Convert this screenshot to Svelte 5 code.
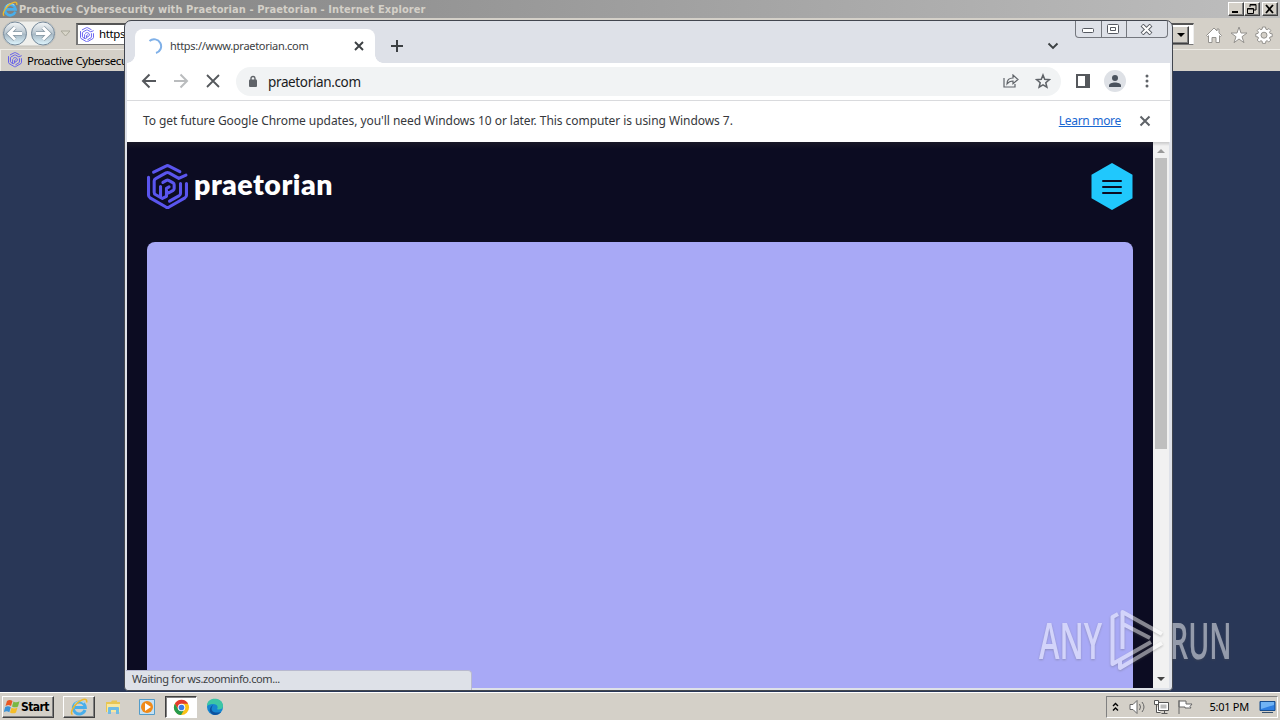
<script>
  const title = 'Proactive Cybersecurity with Praetorian - Praetorian - Internet Explorer';
</script>

{#snippet hexLogo(size, width)}
  <svg width={size} height={size * 1.1} viewBox="0 0 40 44" fill="none" stroke="#5a55ee" stroke-width={width} stroke-linejoin="round" stroke-linecap="round">
    <path d="M6.500 8 18.500 2Q20 1.200 21.500 2L32 7.500" />
    <path d="M1.500 13V30.500Q1.500 32 3 33L18.500 42Q20 42.800 21.500 42L37 33Q38.500 32 38.500 30.500V19" />
    <path d="M15.500 18 19 16Q20 15.500 21 16L25.500 18.500Q26.500 19 26.500 20.200V24Q26.500 25.200 25.500 25.800L21 28.300 19 27.200V23.700L21.500 22.300M19 27.200V31.500L15 33.500 13.200 32.500V22M13.200 32.500 8.500 30Q7 29.200 7 27.500V16.500Q7 15 8.500 14.200L18.500 8.700Q20 8 21.500 8.700L31 14 38 10.800M32.700 19V28.500Q32.700 30 31.500 30.800L22 36.300" />
  </svg>
{/snippet}

{#snippet ieIcon(size)}
  <svg width={size} height={size} viewBox="0 0 18 18" fill="none">
    <path d="M15 12A6 6 0 1 1 15.300 9.500H5" stroke="#49aeea" stroke-width="3" />
    <path d="M14 5A5.500 5.500 0 0 0 4.500 8" stroke="#a2dcf8" stroke-width="1.200" />
    <path d="M2.500 16.500C-1 15 5 5 11 2.500 15 .5 17.500 1 16.500 4.500" stroke="#edb82d" stroke-width="1.500" />
  </svg>
{/snippet}

<div class="desktop">
  <div class="ie">
    <header class="titlebar">
      {@render ieIcon(16)}
      <span class="title">{title}</span>
      <div class="classic-buttons">
        <button aria-label="Minimize"><svg width="12" height="10"><path d="M2 8h6" stroke="#000" stroke-width="2" /></svg></button>
        <button aria-label="Restore"><svg width="12" height="10" fill="none" stroke="#000"><path d="M4 3V.5h6V6H8M4 1h6M1.500 4.500h6v5h-6zM1.500 5h6" /></svg></button>
        <button class="apart" aria-label="Close"><svg width="12" height="10" stroke="#000" stroke-width="1.800"><path d="m2 1 7 8M9 1 2 9" /></svg></button>
      </div>
    </header>
    <div class="navbar">
      <svg class="history" width="74" height="28" viewBox="0 0 74 28">
        <defs><linearGradient id="orb" x2="0" y2="1"><stop stop-color="#f5f7f8" /><stop offset=".48" stop-color="#bac7d0" /><stop offset=".52" stop-color="#a6b7c3" /><stop offset="1" stop-color="#e0f7ff" /></linearGradient></defs>
        <path d="M14 1h28a12.500 12.500 0 0 1 0 25H14A12.500 12.500 0 0 1 14 1Z" fill="#efefec" stroke="#c1bfb8" />
        <circle cx="14" cy="13.500" r="11.500" fill="url(#orb)" stroke="#76899a" />
        <circle cx="42" cy="13.500" r="11.500" fill="url(#orb)" stroke="#76899a" />
        <path d="M21 13.500H8m6-6-6 6 6 6M35 13.500h13m-6-6 6 6-6 6" fill="none" stroke="#8798a4" stroke-width="4.500" />
        <path d="M21 13.500H8m6-6-6 6 6 6M35 13.500h13m-6-6 6 6-6 6" fill="none" stroke="#fff" stroke-width="3" />
        <path d="M60 11h9l-4.500 5z" fill="#d9d6ca" stroke="#aaa89a" />
      </svg>
      <div class="address">{@render hexLogo(14, 2.6)}<span>https</span><i class="drop"></i></div>
      <div class="ie-tools">
        <svg width="18" height="18" viewBox="0 0 18 18"><path d="m1.500 9.500 7.500-7.500 3 3V3h2v4l2.500 2.500-1 1-1-.8v6.800H11v-5H7v5H3.500V9.700l-1 .8z" fill="#fff" stroke="#94928e" /></svg>
        <svg width="18" height="18" viewBox="0 0 18 18"><path d="m9 1 2 6h6l-5 3.700 2 6L9 13l-5 3.700 2-6L1 7h6z" fill="#fff" stroke="#94928e" /></svg>
        <svg width="18" height="18" viewBox="0 0 18 18"><path d="m7.500 1h3l.4 2.200 1.200.5L14 2.500 15.800 4.500l-1.300 1.700.5 1.200 2.200.4v2.800l-2.200.4-.5 1.200 1.300 1.800-2 2-1.700-1.300-1.200.5-.4 2.200H7.500l-.4-2.200-1.200-.5L4.200 16l-2-2 1.300-1.800L3 11l-2.200-.4V7.800L3 7.400l.5-1.200L2.200 4.500l2-2 1.700 1.200 1.200-.5z" fill="#fff" stroke="#94928e" /><circle cx="9" cy="9.200" r="3" fill="#d4d0c8" stroke="#94928e" /></svg>
      </div>
    </div>
    <div class="favorites">{@render hexLogo(14, 2.6)}<span>Proactive Cybersecu</span></div>
    <div class="ie-page"></div>
  </div>

  <section class="chrome">
    <div class="window-buttons">
      <i><svg width="13" height="6"><rect x=".5" y=".5" width="11" height="4" rx="1" fill="#fff" stroke="#555961" /></svg></i>
      <i><svg width="13" height="10" fill="#fff" stroke="#555961"><rect x=".5" y=".5" width="11" height="9" rx="1" /><path d="M3.500 3.500h5v3h-5z" /></svg></i>
      <i><svg width="13" height="11" viewBox="0 0 13 11"><path d="m2 1 9 9M11 1 2 10" stroke="#555961" stroke-width="4" /><path d="m2.500 1.500 8 8M10.500 1.500l-8 8" stroke="#fff" stroke-width="2.200" /></svg></i>
    </div>
    <div class="tabs">
      <div class="tab">
        <svg width="16" height="16" viewBox="0 0 16 16" fill="none"><path d="M2.500 3A7 7 0 1 1 9 15" stroke="#7fb0e8" stroke-width="2" /></svg>
        <span>https://www.praetorian.com</span>
        <svg width="10" height="10" viewBox="0 0 10 10"><path d="m1 1 8 8M9 1 1 9" stroke="#3c4043" stroke-width="1.900" /></svg>
      </div>
      <svg class="new-tab" width="14" height="14"><path d="M7 1v12M1 7h12" stroke="#3c4043" stroke-width="2" /></svg>
      <svg class="tab-search" width="12" height="8"><path d="m1.500 1.500 4.500 4.500 4.500-4.500" fill="none" stroke="#3c4043" stroke-width="1.900" /></svg>
    </div>
    <div class="toolbar">
      <div class="nav">
        <svg width="16" height="16" viewBox="0 0 16 16" fill="none" stroke="#55585c" stroke-width="2"><path d="M15 8H2m6.500-6.500L2 8l6.500 6.500" /></svg>
        <svg width="16" height="16" viewBox="0 0 16 16" fill="none" stroke="#babcbe" stroke-width="2"><path d="M1 8h13M7.500 1.500 14 8l-6.500 6.500" /></svg>
        <svg width="16" height="16" viewBox="0 0 16 16" stroke="#55585c" stroke-width="1.800"><path d="m2 2 12 12M14 2 2 14" /></svg>
      </div>
      <div class="omnibox">
        <svg width="10" height="13" viewBox="0 0 10 13"><path d="M3 5V3.500a2 2 0 0 1 4 0V5" fill="none" stroke="#5f6368" stroke-width="1.400" /><rect x="1" y="4.500" width="8" height="7.500" rx="1" fill="#5f6368" /></svg>
        <span>praetorian.com</span>
        <svg width="16" height="14" viewBox="0 0 16 14" fill="none" stroke="#5f6368" stroke-width="1.200"><path d="M1 4v9h11v-3M4 10c0-4 2-6 6-6V1l5 4.500-5 4.300V7C7 7 5.500 8 4 10Z" /></svg>
        <svg width="16" height="16" viewBox="0 0 16 16" fill="none" stroke="#5f6368" stroke-width="1.500"><path d="m8 2 1.700 4.300 4.700.4-3.600 3 1.100 4.500L8 11.800l-3.900 2.400 1.100-4.500-3.600-3 4.700-.4z" /></svg>
      </div>
      <svg class="panel" width="14" height="14"><path d="M1 1h12v12H1z" fill="none" stroke="#55585c" stroke-width="2" /><path d="M9 1h4v12H9z" fill="#55585c" /></svg>
      <svg class="avatar" width="22" height="22"><circle cx="11" cy="11" r="11" fill="#dee1e6" /><circle cx="11" cy="8" r="3" fill="#4b535e" /><path d="M5 17v-1.500c0-4 12-4 12 0V17z" fill="#4b535e" /></svg>
      <svg class="dots" width="4" height="16" fill="#5f6368"><circle cx="2" cy="3" r="1.500" /><circle cx="2" cy="8" r="1.500" /><circle cx="2" cy="13" r="1.500" /></svg>
    </div>
    <div class="infobar">
      <span>To get future Google Chrome updates, you'll need Windows 10 or later. This computer is using Windows 7.</span>
      <a href="#learn">Learn more</a>
      <svg width="12" height="12"><path d="m1.500 1.500 9 9m0-9-9 9" stroke="#5f6368" stroke-width="2" /></svg>
    </div>
    <div class="view">
      <main>
        <div class="site-header">
          {@render hexLogo(41, 3)}
          <span class="brand">praetorian</span>
          <svg class="menu" width="42" height="47" viewBox="0 0 42 47"><path d="m21 0 20.500 11.800v23.400L21 47 .5 35.200V11.800Z" fill="#20c8fd" /><path d="M12 18h18M12 24h18M12 30h18" stroke="#0c0c22" stroke-width="2" stroke-linecap="round" /></svg>
        </div>
        <div class="hero"></div>
      </main>
      <div class="scrollbar"><i class="up"></i><b></b><i class="down"></i></div>
    </div>
    <div class="status">Waiting for ws.zoominfo.com...</div>
  </section>

  <div class="watermark">
    <span>ANY</span>
    <svg width="58" height="62" viewBox="0 0 58 62" fill="none" stroke="#fff" stroke-linejoin="round">
      <path d="M9 5 3.500 8v47L42 33M13.500 40V3L53 25M11 51V59L53 34M14 15 41 29" stroke-width="4" />
    </svg>
    <span class="run">RUN</span>
  </div>

  <footer class="taskbar">
    <button class="start"><svg width="17" height="16" viewBox="0 0 17 16"><path d="M3 2c2-1.500 4-1 5.500 0L7 7C5 5.500 3.500 6 1.500 7z" fill="#e95823" /><path d="M9.500 2.500c2 1.300 4 1 6-.2L14 7.500c-2 1.300-4 1-6 0z" fill="#79b843" /><path d="M1.200 8c2-1.300 4-1 5.600.2l-1.500 5C3.500 12 2 12-.2 13z" fill="#3a92d7" /><path d="M7.500 8.700c2 1.200 4 1 6-.2L12 13.500c-2 1.300-4 1-6 0z" fill="#f5bd28" /></svg><b>Start</b></button>
    <div class="task raised">{@render ieIcon(18)}</div>
    <div class="task"><svg width="17" height="16" viewBox="0 0 17 16"><path d="M1 3h5l1-1.500h5V3h3v10H1z" fill="#e8c654" /><path d="M2 5h13v8H2z" fill="#f8e8a0" /><path d="M3 15V9q0-1 1-1h9q1 0 1 1v6h-3v-4H6v4z" fill="#70bce4" /></svg></div>
    <div class="task"><svg width="16" height="16"><path d="M.5.5h15v15H.5z" fill="#c4e1f4" stroke="#539cc9" /><circle cx="8" cy="8" r="6" fill="#f08a18" /><path d="m6 4 6 4-6 4z" fill="#fff" /></svg></div>
    <div class="task active"><svg width="17" height="17" viewBox="0 0 18 18"><circle cx="9" cy="9" r="8" fill="#fbc116" /><path d="M2 5a8 8 0 0 1 14 0H9L5.500 11z" fill="#e33b2e" /><path d="M2 5a8 8 0 0 0 6.500 12L12 11H5.500z" fill="#269b4d" /><circle cx="9" cy="9" r="4" fill="#fff" /><circle cx="9" cy="9" r="3" fill="#3c7ce5" /></svg></div>
    <div class="task"><svg width="18" height="18" viewBox="0 0 18 18"><circle cx="9" cy="9" r="8" fill="#1686d0" /><path d="M1 8C1-2 17-1 17 8c0 4-5 4-6 3 2-3-1-5-4-5-3 0-5 1-6 2z" fill="#3cc6a5" /><path d="M7 7c-4 6 1 9 8 7-2 3-7 4-9 2-4-3-2-7 1-9z" fill="#0d519e" /></svg></div>
    <div class="tray">
      <svg width="7" height="10" fill="none" stroke="#000" stroke-width="1.400"><path d="m1 4 2.500-2.500L6 4M1 8.500 3.500 6 6 8.500" /></svg>
      <svg width="17" height="16" fill="#fff" stroke="#666"><path d="M1 5.500h3l4-4v13l-4-4H1z" /><path d="M10.500 5q2 3 0 6M13 3q4 5 0 10" fill="none" /></svg>
      <svg width="17" height="16" fill="#fff" stroke="#555"><path d="M5.500 3.500h10v8h-10zM8.500 14.500h6M11.500 12v2M1.500 1.500h4v4h-4zM3.500 6v7.500h4" /><path d="M7.500 5.500h6v4h-6z" fill="#bbb" stroke="none" /></svg>
      <svg width="17" height="16" fill="#fff" stroke="#666"><path d="M2 1v14M2 2h7v3h6l-2 2.500 1 1.500H8V8H2z" /></svg>
      <span>5:01 PM</span>
      <svg width="17" height="14"><path d="M1 1.500h15v9H1z" fill="#2e7ee0" stroke="#174d8d" /><path d="M2 2h13v3L2 9z" fill="#70b3f4" /><path d="M3 12.500h11" stroke="#354f6b" /></svg>
    </div>
  </footer>
</div>

<style>
  :global(body) { margin: 0; overflow: hidden; }
  * { box-sizing: border-box; }
  svg { display: block; flex: none; }
  button { font: inherit; padding: 0; margin: 0; }
  .desktop { position: relative; width: 1280px; height: 720px; overflow: hidden; background: #d4d0c8; font: 11px "Noto Sans", sans-serif; color: #000; }
  .ie { height: 692px; display: flex; flex-direction: column; }
  .titlebar { height: 18px; background: linear-gradient(90deg, #808080, #bebebe); display: flex; align-items: center; padding: 0 2px; color: #d4d0c8; white-space: nowrap; }
  .title { flex: 1; margin-left: 1px; font: bold 11px "DejaVu Sans Condensed", "DejaVu Sans", sans-serif; letter-spacing: .08px; }
  .classic-buttons { display: flex; }
  .classic-buttons button { width: 16px; height: 14px; display: grid; place-items: center; background: #d4d0c8; border: 1px solid; border-color: #fff #404040 #404040 #fff; box-shadow: inset -1px -1px #808080; }
  .classic-buttons .apart { margin-left: 2px; }
  .navbar { height: 31px; padding: 2px 7px 0 1px; display: flex; align-items: flex-start; }
  .address { margin: 3px 0 0 1px; width: 1118px; height: 22px; display: flex; align-items: center; gap: 5px; background: #fff; border: 1px solid #777; border-top: 2px solid #555; border-left-width: 2px; border-right-color: #eee; padding-left: 2px; }
  .address span { flex: 1; font-size: 11.500px; letter-spacing: -.4px; line-height: 14px; padding-bottom: 1px; }
  .drop { width: 17px; height: 18px; margin-right: 4px; background: #d4d0c8; border: 1px solid; border-color: #fff #404040 #404040 #fff; box-shadow: inset -1px -1px #808080; display: grid; place-items: center; }
  .drop::before { content: ""; border: 4px solid transparent; border-top-color: #000; border-bottom: 0; }
  .ie-tools { margin: 6px 0 0 auto; display: flex; gap: 7px; }
  .favorites { height: 22px; border-top: 1px solid #eeece6; border-left: 1px solid #eeece6; display: flex; align-items: center; padding: 0 0 1px 7px; gap: 5px; font-size: 11.500px; letter-spacing: -.44px; white-space: nowrap; }
  .ie-page { flex: 1; background: #293757; }

  .chrome { position: absolute; left: 124px; top: 20px; width: 1049px; height: 671px; border: 1px solid #42464f; border-radius: 7px 7px 4px 4px; background: #dee1e8; padding: 0 2px 2px; display: flex; flex-direction: column; }
  .window-buttons { position: absolute; right: 4px; top: 0; height: 17px; width: 93px; display: grid; grid-template-columns: 25px 25px 41px; border: 1px solid #74777e; border-top: 0; border-radius: 0 0 4px 4px; }
  .window-buttons i { display: grid; place-items: center; padding-right: 1px; }
  .window-buttons i:first-child { padding-top: 3px; }
  .window-buttons i + i { border-left: 1px solid #74777e; }
  .tabs { height: 42px; flex: none; display: flex; align-items: flex-end; padding-left: 8px; }
  .tab { position: relative; width: 240px; height: 34px; background: #fff; border-radius: 8px 8px 0 0; display: flex; align-items: center; padding: 0 11px 0 12px; }
  .tab::before, .tab::after { content: ""; position: absolute; bottom: 0; width: 8px; height: 8px; }
  .tab::before { left: -8px; background: radial-gradient(circle at 0 0, transparent 7.500px, #fff 8px); }
  .tab::after { right: -8px; background: radial-gradient(circle at 100% 0, transparent 7.500px, #fff 8px); }
  .tab span { flex: 1; margin-left: 7px; padding-bottom: 2px; color: #3c3e42; letter-spacing: -.29px; }
  .new-tab { margin: 0 0 10px 15px; }
  .tab-search { margin: 0 111px 13px auto; }
  .toolbar { height: 38px; flex: none; background: #fff; border-bottom: 1px solid #d9dadd; display: flex; align-items: center; padding: 0 21px 1px 14px; }
  .nav { display: flex; gap: 16px; }
  .omnibox { height: 29px; width: 825px; margin-left: 15px; border-radius: 15px; background: #f1f3f4; display: flex; align-items: center; padding: 0 10px 0 12px; }
  .omnibox span { flex: 1; margin-left: 10px; padding-top: 2px; font-size: 13.500px; letter-spacing: -.36px; color: #1b1c1e; }
  .omnibox svg:last-child { margin-left: 16px; }
  .panel { margin-left: 15px; }
  .avatar { margin-left: 14px; }
  .dots { margin-left: auto; }
  .infobar { height: 41px; flex: none; background: #fff; display: flex; align-items: center; padding: 0 19px 1px 16px; font-size: 12px; color: #36383c; white-space: nowrap; }
  .infobar span { flex: 1; letter-spacing: -.055px; padding-bottom: 2px; }
  .infobar a { color: #1967d2; margin-right: 18px; letter-spacing: -.3px; padding-bottom: 2px; }
  .view { flex: 1; min-height: 0; display: flex; }
  main { width: 1026px; background: linear-gradient(#191827, #0c0c22 7px); padding: 20px 20px 0; display: flex; flex-direction: column; }
  .site-header { height: 80px; display: flex; align-items: flex-start; }
  .site-header > :global(svg:first-child) { margin-top: 2px; }
  .brand { margin: 4px 0 0 6px; color: #fff; font: 800 28.500px/36px Lato, sans-serif; letter-spacing: .5px; }
  .menu { margin-left: auto; margin-top: 1px; }
  .hero { flex: 1; border-radius: 8px 8px 0 0; background: #a8a9f6; }
  .scrollbar { width: 16px; background: linear-gradient(#c9c9ca, #f1f1f1 4px); display: flex; flex-direction: column; align-items: center; padding: 7px 0 7px; }
  .up, .down { border: 4px solid transparent; }
  .up { border-top: 0; border-bottom-color: #999; }
  .down { border-bottom: 0; border-top-color: #444; margin-top: auto; }
  .scrollbar b { margin-top: 5px; width: 12px; height: 291px; background: #bfbfbf; }
  .status { position: absolute; left: 1px; bottom: 0; width: 346px; height: 20px; background: #dee1e8; border-top: 1px solid #b8b9cf; border-right: 1px solid #b8b9cf; border-radius: 0 4px 0 3px; padding: 0 0 0 6px; line-height: 16px; letter-spacing: -.4px; color: #3c4043; }

  .watermark { position: absolute; left: 1039px; top: 609px; height: 62px; display: flex; align-items: center; opacity: .5; filter: drop-shadow(0 1px 1px #555a); }
  .watermark span { display: block; width: 63px; color: #fff; font: 600 50px/62px "Open Sans", sans-serif; transform: scaleX(.62); transform-origin: left; white-space: nowrap; }
  .watermark .run { transform: scaleX(.57); }
  .watermark svg { margin: 0 3px 0 7px; }

  .taskbar { height: 28px; border-top: 1px solid #fff; display: flex; align-items: center; padding: 1px 2px 0; }
  .start { width: 52px; height: 22px; display: flex; align-items: center; gap: 0; padding-left: 1px; background: #d4d0c8; border: 1px solid; border-color: #fff #404040 #404040 #fff; box-shadow: inset -1px -1px #808080; margin-right: 9px; }
  .start b { font: bold 12px "DejaVu Sans Condensed", sans-serif; letter-spacing: -.6px; }
  .task { width: 32px; height: 22px; display: grid; place-items: center; margin-right: 2px; }
  .raised { border: 1px solid; border-color: #fff #404040 #404040 #fff; box-shadow: inset -1px -1px #808080; }
  .active { background: #fff; border: 1px solid; border-color: #404040 #fff #fff #404040; box-shadow: inset 1px 1px #808080; }
  .tray { margin-left: auto; width: 172px; height: 22px; border: 1px solid; border-color: #808080 #fff #fff #808080; display: flex; align-items: center; padding: 0 1px 0 5px; }
  .tray svg:nth-child(2) { margin-left: 10px; }
  .tray svg:nth-child(3), .tray svg:nth-child(4) { margin-left: 7px; }
  .tray span { margin-left: auto; margin-right: 10px; padding-bottom: 1px; letter-spacing: -.25px; white-space: nowrap; }
</style>
